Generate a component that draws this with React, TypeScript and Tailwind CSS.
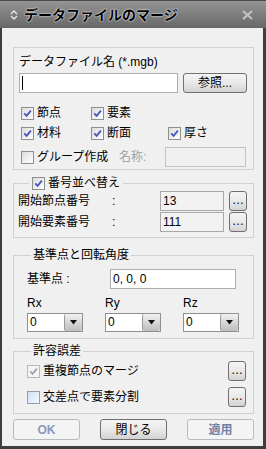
import React from 'react';

const FONT = "font-['Liberation_Sans','Noto_Sans_CJK_JP',sans-serif]";

type CheckProps = { checked?: boolean; disabled?: boolean; hover?: boolean };

// Classic themed checkbox, 13px square.
const Check: React.FC<CheckProps> = ({ checked, disabled, hover }) => {
  let box = 'border-[#8e8f8f] bg-gradient-to-br from-[#dcdcdc] to-white';
  if (disabled) box = 'border-[#b8b8b8] bg-[#f4f4f4]';
  if (hover) box = 'border-[#8e9fb5] bg-gradient-to-br from-[#cfe0f4] to-[#f6f9fd]';
  return (
    <span className={`flex h-[13px] w-[13px] shrink-0 items-center justify-center border ${box}`}>
      {checked && (
        <svg width="9" height="9" viewBox="0 0 9 9">
          <path
            d="M1.2 4.4 L3.6 6.8 L7.9 1.6"
            fill="none"
            stroke={disabled ? '#a3a3a3' : '#4657c0'}
            strokeWidth="1.8"
          />
        </svg>
      )}
    </span>
  );
};

const CheckLabel: React.FC<CheckProps & { label: string; className?: string }> = ({ label, className, ...rest }) => (
  <label className={`flex items-center gap-[3px] ${className ?? ''}`}>
    <Check {...rest} />
    <span className="text-[12px] leading-[16px]">{label}</span>
  </label>
);

const Btn: React.FC<{ children: React.ReactNode; className?: string; disabled?: boolean }> = ({
  children,
  className,
  disabled,
}) => (
  <button
    type="button"
    className={`flex items-center justify-center rounded-[3px] border text-[12px] leading-none ${
      disabled
        ? 'border-[#b9bcbf] bg-[#f4f4f4] font-bold text-[#6f82a8]'
        : 'border-[#707070] bg-gradient-to-b from-[#f4f4f4] via-[#e9e9e9] to-[#d2d2d2] text-black'
    } ${className ?? ''}`}
  >
    {children}
  </button>
);

const Dots: React.FC = () => (
  <Btn className="h-[20px] w-[18px] shrink-0 pb-[3px]">…</Btn>
);

const Select: React.FC<{ value: string }> = ({ value }) => (
  <div className="flex h-[19px] w-[56px] border border-[#8e8f8f] bg-white">
    <span className="flex-1 pl-[2px] text-[12px] leading-[17px]">{value}</span>
    <span className="flex w-[18px] items-center justify-center rounded-[2px] border-l border-[#9a9a9a] bg-gradient-to-b from-[#f2f2f2] to-[#bdbdbd]">
      <svg width="7" height="5" viewBox="0 0 7 5">
        <path d="M0 0 H7 L3.5 4.5 Z" fill="#111" />
      </svg>
    </span>
  </div>
);

export default function App() {
  return (
    <div className={`flex h-[449px] w-[266px] flex-col bg-[#3e3e3e] text-black ${FONT}`}>
      {/* title bar */}
      <div className="flex h-[28px] shrink-0 items-center border-t border-[#4a4a4a] bg-gradient-to-b from-[#949494] to-[#686868]">
        <svg width="8" height="10" viewBox="0 0 8 10" className="ml-[10px]">
          <path d="M1 4 L4 1 L7 4" fill="none" stroke="#e8e8e8" strokeWidth="1.4" />
          <path d="M1 6 L4 9 L7 6" fill="none" stroke="#e8e8e8" strokeWidth="1.4" />
        </svg>
        <span className="ml-[6px] text-[14px] font-bold leading-none text-black [text-shadow:0_0_2px_#ffffff,0_0_1px_#ffffff]">
          データファイルのマージ
        </span>
        <svg width="11" height="10" viewBox="0 0 11 10" className="ml-auto mr-[13px]">
          <path d="M1 1 L10 9 M10 1 L1 9" stroke="#c4c4c4" strokeWidth="2" />
        </svg>
      </div>

      {/* body */}
      <div className="mb-[3px] ml-[2px] mr-[3px] flex flex-1 flex-col bg-[#f0f0f0] pl-[11px] pr-[9px] pt-[19px]">
        {/* file group */}
        <div className="flex flex-col border border-[#d0d0d0] pb-[2px] pl-[5px] pt-[7px]">
          <span className="text-[12px] leading-[15px]">データファイル名 (*.mgb)</span>
          <div className="mt-[3px] flex">
            <div className="flex h-[20px] w-[159px] items-center border border-[#abadb3] bg-white pl-[2px]">
              <span className="h-[14px] w-px bg-black" />
            </div>
            <Btn className="ml-[5px] h-[20px] w-[64px]">参照...</Btn>
          </div>
          <div className="mt-[12px] flex pl-[2px]">
            <CheckLabel checked label="節点" className="w-[70px]" />
            <CheckLabel checked label="要素" />
          </div>
          <div className="mt-[4px] flex pl-[2px]">
            <CheckLabel checked label="材料" className="w-[70px]" />
            <CheckLabel checked label="断面" className="w-[77px]" />
            <CheckLabel checked label="厚さ" />
          </div>
          <div className="mt-[6px] flex h-[20px] items-center pl-[2px]">
            <CheckLabel label="グループ作成" className="w-[98px]" />
            <span className="text-[12px] text-[#a0a0a0]">名称:</span>
            <div className="ml-auto mr-[7px] h-[20px] w-[81px] border border-[#c3c3c3] bg-[#f0f0f0]" />
          </div>
        </div>

        {/* numbering group */}
        <fieldset className="mt-[5px] border border-[#d0d0d0] pb-[5px] pl-[4px]">
          <legend className="ml-[11px] px-[3px]">
            <CheckLabel checked label="番号並べ替え" />
          </legend>
          <div className="flex h-[20px] items-center">
            <span className="w-[94px] text-[12px]">開始節点番号</span>
            <span className="w-[48px] text-[12px]">:</span>
            <div className="flex h-[20px] w-[64px] items-center border border-[#a9a9a9] bg-[#f2f2f2] pl-[2px] text-[12px]">13</div>
            <span className="ml-[5px]"><Dots /></span>
          </div>
          <div className="mt-[1px] flex h-[20px] items-center">
            <span className="w-[94px] text-[12px]">開始要素番号</span>
            <span className="w-[48px] text-[12px]">:</span>
            <div className="flex h-[20px] w-[64px] items-center border border-[#a9a9a9] bg-[#f2f2f2] pl-[2px] text-[12px]">111</div>
            <span className="ml-[5px]"><Dots /></span>
          </div>
        </fieldset>

        {/* base point group */}
        <fieldset className="mt-[9px] border border-[#d0d0d0] pb-[6px] pl-[13px]">
          <legend className="ml-[4px] px-[2px] text-[12px] leading-[16px]">基準点と回転角度</legend>
          <div className="mt-[6px] flex h-[20px] items-center">
            <span className="w-[83px] text-[12px]">基準点 :</span>
            <div className="flex h-[20px] w-[126px] items-center border border-[#abadb3] bg-white pl-[2px] text-[12px]">0, 0, 0</div>
          </div>
          <div className="mt-[7px] flex gap-[22px]">
            {['Rx', 'Ry', 'Rz'].map((r) => (
              <div key={r} className="flex flex-col">
                <span className="text-[12px] leading-[14px]">{r}</span>
                <div className="mt-[3px]">
                  <Select value="0" />
                </div>
              </div>
            ))}
          </div>
        </fieldset>

        {/* tolerance group */}
        <fieldset className="mt-[4px] border border-[#d0d0d0] pb-[6px] pl-[13px] pr-[7px]">
          <legend className="ml-[4px] px-[2px] text-[12px] leading-[16px]">許容誤差</legend>
          <div className="mt-[2px] flex h-[20px] items-center">
            <CheckLabel checked disabled label="重複節点のマージ" />
            <span className="ml-auto"><Dots /></span>
          </div>
          <div className="mt-[6px] flex h-[20px] items-center">
            <CheckLabel hover label="交差点で要素分割" />
            <span className="ml-auto"><Dots /></span>
          </div>
        </fieldset>

        {/* dialog buttons */}
        <div className="mt-[5px] flex justify-between">
          <Btn disabled className="h-[21px] w-[67px] text-[#8799bb]">OK</Btn>
          <Btn className="h-[21px] w-[67px]">閉じる</Btn>
          <Btn disabled className="h-[21px] w-[67px]">適用</Btn>
        </div>
      </div>
    </div>
  );
}
